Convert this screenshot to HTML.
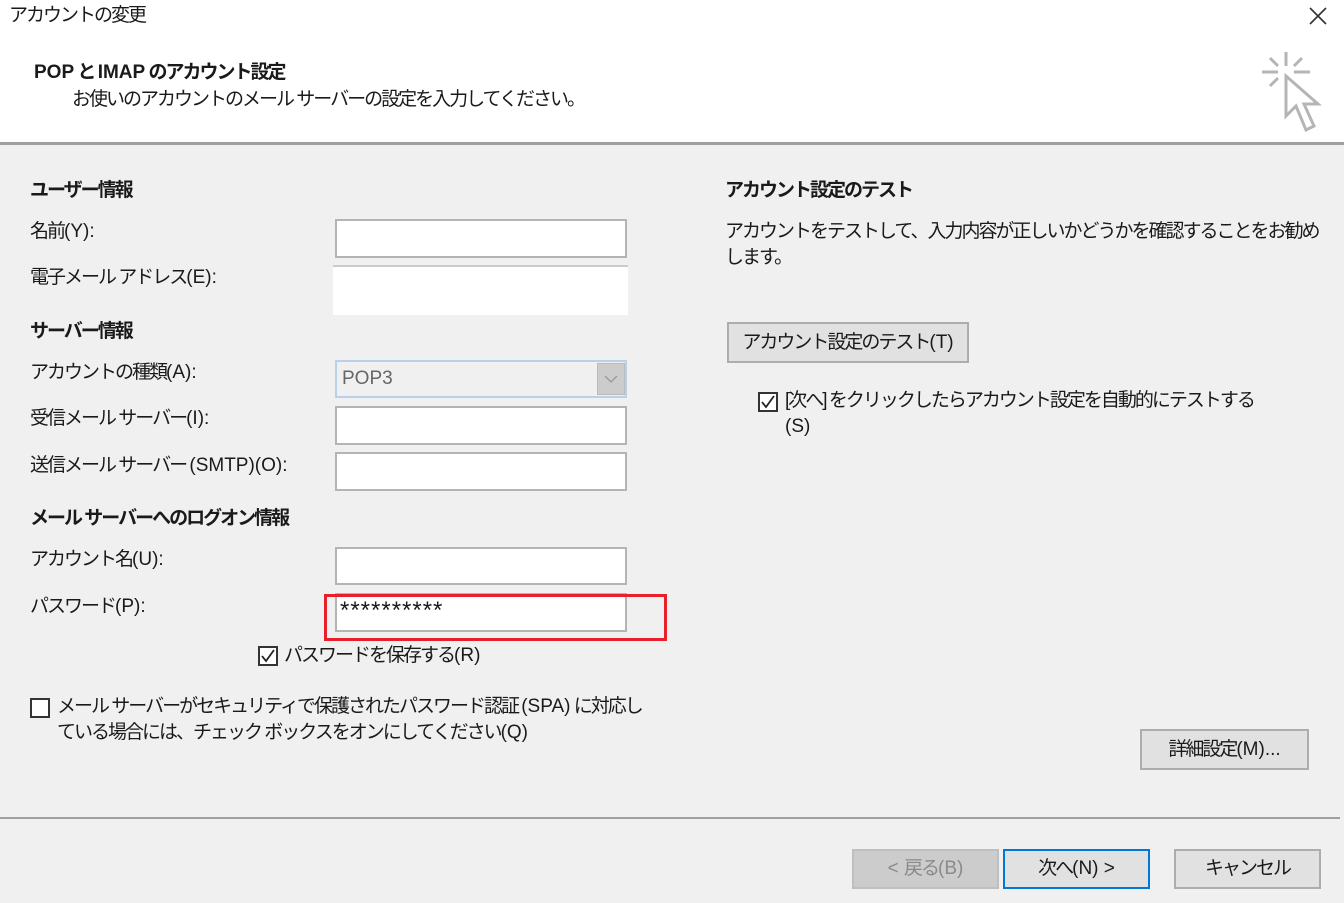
<!DOCTYPE html>
<html><head><meta charset="utf-8"><style>
body{margin:0;width:1344px;height:903px;background:#f0f0f0;font-family:"Liberation Sans","Noto Sans CJK JP",sans-serif;color:#1a1a1a;position:relative;overflow:hidden}
.a{position:absolute;white-space:nowrap;font-size:19px;line-height:24px;letter-spacing:-2px}
.b{font-weight:bold}
.l{letter-spacing:0}
.f{position:absolute;background:#fff;border:2px solid #b4b4b4;box-sizing:border-box}
.btn{position:absolute;background:#e1e1e1;border:2px solid #adadad;box-sizing:border-box;font-size:19px;letter-spacing:-2px;white-space:nowrap;text-align:center;font-family:"Liberation Sans","Noto Sans CJK JP",sans-serif}
.cb{position:absolute;width:20px;height:20px;border:2px solid #333;box-sizing:border-box;background:#fff}
.ck{position:absolute;width:20px;height:20px}
</style></head><body>
<div style="position:absolute;left:0;top:0;width:1344px;height:142px;background:#fff;border-bottom:3px solid #a0a0a0"></div>
<div class="a" style="left:9px;top:4px">アカウントの変更</div>
<svg style="position:absolute;left:1308px;top:6px" width="20" height="20" viewBox="0 0 20 20" stroke="#333" stroke-width="1.6"><path d="M2 2L18 18M18 2L2 18"/></svg>
<div class="a" style="left:34px;top:61px;font-weight:600"><span class="l">POP</span> と <span class="l">IMAP</span> のアカウント設定</div>
<div class="a" style="left:72px;top:88px">お使いのアカウントのメール サーバーの設定を入力してください。</div>
<svg style="position:absolute;left:1258px;top:48px" width="66" height="90" viewBox="0 0 66 90" fill="none" stroke="#b5b5b5" stroke-width="3">
<path d="M28 4V18M4 24H20M36 24H52M12 10L20 18M44 10L36 18M12 38L20 30"/>
<path d="M28 28V68L38 58L48 82L56 78L46 56H60Z"/>
</svg>
<div class="a b" style="left:30px;top:179px">ユーザー情報</div>
<div class="a" style="left:30px;top:220px">名前<span class="l">(Y):</span></div>
<div class="a" style="left:30px;top:266px">電子メール アドレス<span class="l">(E):</span></div>
<div class="a b" style="left:30px;top:320px">サーバー情報</div>
<div class="a" style="left:30px;top:361px">アカウントの種類<span class="l">(A):</span></div>
<div class="a" style="left:30px;top:407px">受信メール サーバー<span class="l">(I):</span></div>
<div class="a" style="left:30px;top:454px">送信メール サーバー <span class="l">(SMTP)(O):</span></div>
<div class="a b" style="left:30px;top:507px">メール サーバーへのログオン情報</div>
<div class="a" style="left:30px;top:548px">アカウント名<span class="l">(U):</span></div>
<div class="a" style="left:30px;top:595px">パスワード<span class="l">(P):</span></div>
<div class="f" style="left:335px;top:219px;width:292px;height:39px"></div>
<div style="position:absolute;left:333px;top:265px;width:295px;height:48px;background:#fff;border-top:2px solid #ccc"></div>
<div class="f" style="left:335px;top:360px;width:292px;height:38px;background:#f0f0f0;border-color:#b8d0e8"></div>
<div style="position:absolute;left:597px;top:363px;width:28px;height:32px;background:#ccc;border:1px solid #bbb;box-sizing:border-box"></div>
<svg style="position:absolute;left:604px;top:375px" width="14" height="8" viewBox="0 0 14 8" fill="none" stroke="#999" stroke-width="1.3"><path d="M1 1L7 7L13 1"/></svg>
<div class="a" style="left:342px;top:367px;color:#666;letter-spacing:0">POP3</div>
<div class="f" style="left:335px;top:406px;width:292px;height:39px"></div>
<div class="f" style="left:335px;top:452px;width:292px;height:39px"></div>
<div class="f" style="left:335px;top:547px;width:292px;height:38px"></div>
<div class="f" style="left:335px;top:593px;width:292px;height:39px"></div>
<div class="a" style="left:340px;top:599px;font-size:24px;letter-spacing:1px">**********</div>
<div style="position:absolute;left:324px;top:594px;width:343px;height:47px;border:3px solid #e8202a;box-sizing:border-box"></div>
<div class="cb" style="left:258px;top:646px"></div>
<svg class="ck" style="left:258px;top:646px" viewBox="0 0 20 20" fill="none" stroke="#222" stroke-width="1.8"><path d="M4 10L8 15L16 4"/></svg>
<div class="a" style="left:284px;top:644px">パスワードを保存する<span class="l">(R)</span></div>
<div class="cb" style="left:30px;top:698px"></div>
<div class="a" style="left:57px;top:695px">メール サーバーがセキュリティで保護されたパスワード認証 <span class="l">(SPA)</span> に対応し</div>
<div class="a" style="left:57px;top:721px">ている場合には、チェック ボックスをオンにしてください<span class="l">(Q)</span></div>
<div class="a b" style="left:725px;top:179px">アカウント設定のテスト</div>
<div class="a" style="left:725px;top:220px">アカウントをテストして、入力内容が正しいかどうかを確認することをお勧め</div>
<div class="a" style="left:725px;top:246px">します。</div>
<div class="btn" style="left:727px;top:322px;width:242px;height:41px;line-height:37px">アカウント設定のテスト<span class="l">(T)</span></div>
<div class="cb" style="left:758px;top:392px"></div>
<svg class="ck" style="left:758px;top:392px" viewBox="0 0 20 20" fill="none" stroke="#222" stroke-width="1.8"><path d="M4 10L8 15L16 4"/></svg>
<div class="a" style="left:785px;top:389px">[次へ] をクリックしたらアカウント設定を自動的にテストする</div>
<div class="a" style="left:785px;top:415px;letter-spacing:0">(S)</div>
<div class="btn" style="left:1140px;top:729px;width:169px;height:41px;line-height:37px">詳細設定<span class="l">(M)...</span></div>
<div style="position:absolute;left:0;top:817px;width:1340px;height:2px;background:#a0a0a0"></div>
<div class="btn" style="left:852px;top:849px;width:147px;height:40px;line-height:36px;background:#ccc;border-color:#bfbfbf;color:#8a8a8a"><span class="l">&lt; </span>戻る<span class="l">(B)</span></div>
<div class="btn" style="left:1003px;top:849px;width:147px;height:40px;line-height:36px;border-color:#0078d7">次へ<span class="l">(N) &gt;</span></div>
<div class="btn" style="left:1174px;top:849px;width:147px;height:40px;line-height:36px">キャンセル</div>
</body></html>
